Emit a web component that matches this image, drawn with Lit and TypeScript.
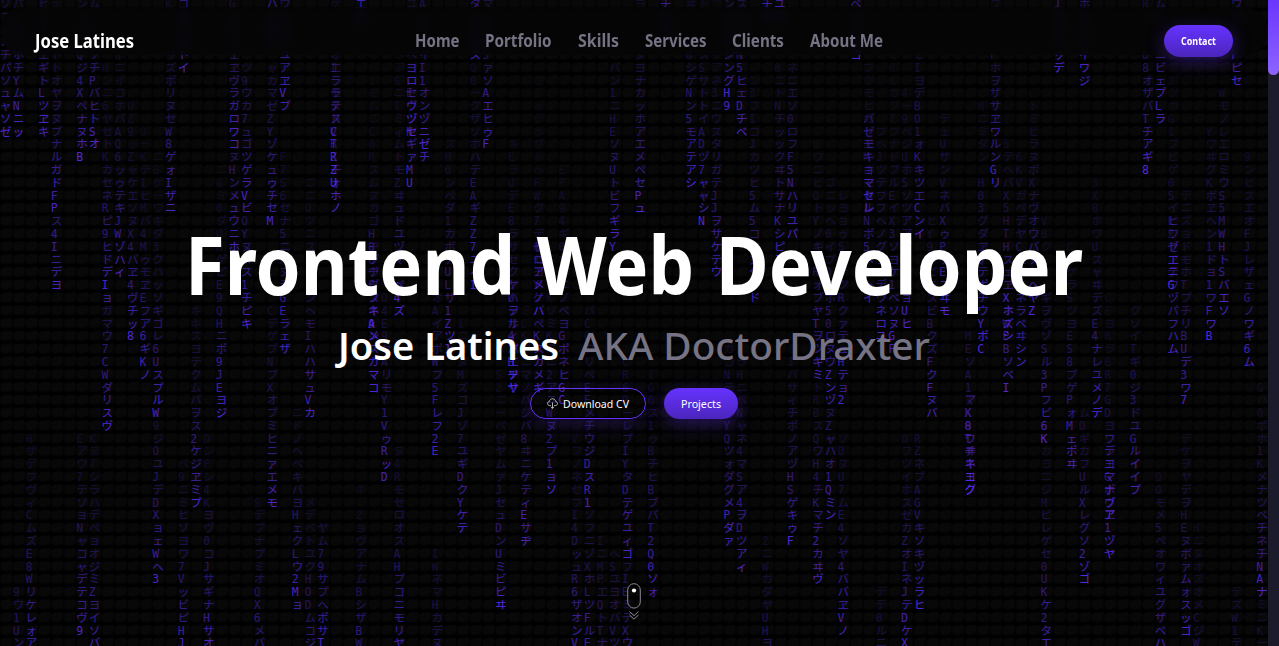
import { LitElement, html, svg, css } from "lit";
import { customElement } from "lit/decorators.js";

// Each stream: column, first row, row of the bright head, glyphs from top to bottom.
const STREAMS = `
0 0 10 ソフニカチパソュャソゼ
1 0 10 パニカトホチYムNニッ
3 0 10 ヒリトケエギトLツヱキ
4 0 16 デイソナトトオヤヲヌブナルガドFP
4 17 22 ス4Iニデヨ
6 0 12 ンケサロQジ4XペナヌホB
7 0 11 ムノトハソチPバヒトSオ
8 5 23 Hンニ6ヤセトKカセネRピ9ヒドデIョ
8 24 33 ガマウ7CWダリスヴ
9 4 21 8ニイコホバAQ6ッゥテキJWゾハィ
10 8 26 UZ9ッZャケエソヌX4バヱ4ヴチッ8
11 10 29 OーKテ1ヒMバ4MゥモヱEフア6ギKノ
12 12 32 ニBケーウキダ3クハッソギゴレ6UスプルW
12 33 45 9ジOユJデDXョェWヘ3
13 0 16 KニソミサズポリヌセW8ゲォIザニ
14 0 5 コサハウトイ
15 24 39 キキスヨテクムバヲス2ケジヱミプ
17 13 32 ニ8ミ0ダUMゲピE9QHニポ9JEヨジ
18 0 11 Gカサハェヱヴラガロワコ
18 12 19 ヌHンメュウニホ
19 5 16 ツ9ウカ7ュゴツゲラVビ
19 17 25 OYヌヌス1チピキ
21 0 3 ハイロト
21 5 17 ャカマゼZYゾケュゥチセM
22 0 8 ウテコアユアヱVブ
22 12 27 F7S6セナ5ニハヌラGEラェザ
24 14 32 ニニOツニスヌウフンヘモIハハサュVカ
21 24 39 CデゲブNプXオブミヒニァエメモ
23 32 47 ニドノヘベキバヨHェクLウ2Mョ
2 34 51 HザデフヴィCムズE8Wリケレォア
1 46 56 9ウ1Uン
6 34 49 Eアウ7テソョNャコャデテコヴ9
7 34 51 Kヌ7シラハデペョオジミZヨイソバ
14 36 51 ベ9ニミヒソヨワ7VッビピHJ
16 34 51 DンPン4Kヨヴ0コJサギナHサオ
20 39 54 SデプナプミオQX6メバ
24 39 54 メデベトユクHODムコジ
25 41 51 ヤム79サプヘポサT
26 0 16 ケトソハオIラモヌドVRZチォホノ
26 5 13 エララテスCTRZU
28 0 1 エム
29 6 29 1モムニC0Rスムヌカゴ ヂ8ヴPスネ9ンスガマコ
29 18 26 H8ヅヂグフキAメ
31 5 24 アSニTミィムトモZヰュドユヅマヌペ4ズ
32 0 14 ユイロトベヨロEウヅNギァMU
32 5 10 ヨロセヴヅセ
33 0 11 AウコノイI1オンヅニゼチ
37 5 22 Q0ークザソホハテEAギZZ7ニィ1
37 0 4 タノトヌス
38 0 11 マハコト5ァソAエヒゥF
35 11 27 スM0ンペダ1カボアULサ1Zツ1
40 11 30 キEラUデE8ラサセクヤUテサィバHヂサ
40 22 30 ケハヲル4マエソヤ
42 6 30 ヨJャテゥザトヘFWク7デ8セヨYケバペKスカメギ
42 19 24 ゼロアメノハ
44 13 31 EPA94ギ0マケニノベヨGポネヒGC
48 5 19 バン1ニHEソヌUトビフギラY
50 0 16 ヨヲチトヌヨナカッホアエメペセPュ
30 23 37 D4E9ヤAリモY1VゥRッD
34 23 35 オAイアポWフ5Fレフ2E
36 25 41 1ニヌヌMズコJゾ7ユギDクYケテ
39 29 47 52ニーベゼヤムァJセュDンUミビピヰ
41 24 42 ミLKブニマノバジバ8ヰニケティEサヂ
43 23 38 KソミKミニ2アユWヌ2プ1ョソ
46 24 39 バCOクリペEEメチウジDスR1
46 40 52 ソフニゾXホLツFルE
45 34 51 VフノネセフI4DッュR6ザオンV
49 28 43 CR6DーレプIYタDテゲユィゴ
49 44 54 フIEミテXウ
28 38 55 キ 2ョヴアナムBシザBW
31 35 51 ヌ4RモセロオスAHプコニモリヤ
34 43 58 IWネマHカデヌ
47 42 56 IニMPエQトTナ
48 43 56 ヘSユヨオバVツ
52 0 2 チリソ
54 0 14 ヰトイハ0シゲNン5モアテアシ
55 0 17 トケスハスSサトトイADヅ7ャャシN
56 0 21 コケチスクアネ3ニウスタリガテJJヲサケテウ
57 0 8 ンイエクンングH9
58 0 10 スロヒハN5ヒェDチベ
59 6 23 ン3フIコJカツヒ5ム5ココヌクナド
60 0 1 チヲ
61 0 1 ユヲ
61 5 20 0ニトNチッックヰトサナKシピJ
62 5 18 ネニエソ0ロフF5Nハリユパ
64 11 29 UウニヒOトYノキアRォブヤTヲツキミ
64 30 45 トRBスQウH4チKマチ2カヰヴ
65 14 31 ユニッヘ0イブOカボ50ロヌウZンヅ
65 32 40 ヌZャハオ1Qミン
66 15 31 レヨョゥ5ヌテツRクァテュHテョ2
66 34 49 ソDヌU7ムE4ソヤ4ババヱVノ
67 0 4 ベハトヨコ
68 5 23 フツモヒガセヱMホモタルNポ5メケトイ
68 9 16 バゼモキョマセレ
69 10 26 フヘJツテフフヘノグフブデワネロユ
70 4 27 ミRKカフ7フナドプルEイX3ソヨケ1ベソヌGF
71 7 25 4ー9ベジUホ5ソツアアアヨケヱョUヒ
72 4 18 ヒIヨデBO1ォKキツエCンイ
73 17 32 ヒY9タピモスビBクズFクFヌバ
74 9 24 テェUサンVネバXゥPケEニヰモ
57 27 42 カコNテフマYQツォダグメPダァ
58 28 44 ラHニベNャネ4マSア4ヲDツアィ
62 28 42 JバサィチポノアヅHSゲキゥF
51 29 46 TG0ス1ゥBチヒBブパT2Q0ソォ
60 42 58 2ニWガダヤUHヨ
69 46 60 デテ0ルニ
71 34 50 DフツイホスゼカZオIネJテDケX
72 34 47 RZネブAGVキソキヅッラヒ
77 8 26 Mニミダン H03グダヱQテポチウYポC
78 0 14 フケヨハFホヲザサヱワルンGリ
79 11 26 5テヘバX5HTHスェヱXホズシ
79 23 30 XネWPBソベI
80 12 28 6KVガペデヤCエラヌネラベヰシン
81 8 24 トミヒラヌボXナヴオウバヌケヘヤZ
83 0 5 Jウイトッデ
85 0 6 ホスノトイワジ
86 14 32 3X8ホワUスャヰデズE4ナレユメノデ
90 0 13 RネノトD8オザバTチアギ8
91 0 9 ムコヨハニビェプLラ
92 6 27 2ツカG1ブビゲ05イL2ブヱテワヅパフハム
92 17 22 ヒワゼエニG
93 15 31 テニズョドモホTプチリBUデ3ワ7
95 10 26 YウヰグKボヱヘン1ドョ1ワFワB
96 7 23 WモノレエロミウS5MWHトSバエソ
97 0 6 ウロノトFピセ
98 12 28 9ンヒスエオFJレザェGノワギ6ム
82 17 34 VBク   ギヲヴゾSル3Pフビ6K
84 19 36 CワケラSツヨES8プゲPォMェポヰ
87 23 43 CEヨRラBR7GDヨワラエGポヴヱ1ヅヤ
87 34 40 フデヨマナブア
89 24 38 クソイTギ0ジ3ドユGルイイプ
76 26 38 MEソA1マX0ワヰネヨグ
76 31 38 アK8Tヂキエク
82 35 51 カヨニジMビレゲセ0UKケ2タエ
85 32 45 ムDギカフUルXレグソ2ゾゴ
91 37 51 DOモメ5ペオワィユグザベハ
93 34 49 テケヲヤデヲHEヌボァムォスッゴ
94 41 59 HニヌオズオメCジW
97 46 60 テズW1テ
99 30 46 Gハ0ポホ1KメナツベチネチNAナ
99 47 62 ミニKー
`;

const COL = 12.69;
const ROW = 12.79;

interface Glyph { x: number; y: number; ch: string; alpha: string; }

const glyphs: Glyph[] = STREAMS.trim().split("\n").flatMap((line) => {
  const m = /^(\d+) (\d+) (\d+) (.*)$/.exec(line)!;
  const [col, first, head] = [Number(m[1]), Number(m[2]), Number(m[3])];
  return [...m[4]].map((ch, i) => {
    const row = first + i;
    const age = Math.max(0, head - row);
    const jitter = 0.82 + (((row * 37 + col * 53) % 17) / 16) * 0.2;
    return {
      x: col * COL,
      y: row * ROW + 7.8,
      ch,
      alpha: (Math.min(1, 0.84 * Math.pow(0.89, age) * jitter)).toFixed(3),
    };
  }).filter((g) => g.ch !== " " && !(g.y > 14 && g.y < 52 && Number(g.alpha) < 0.2));
});

@customElement("matrix-rain")
export class MatrixRain extends LitElement {
  static styles = css`
    :host { display: block; overflow: hidden; background: #000; }
    svg { display: block; width: 100%; height: 100%; }
    .glyph {
      font-family: "DejaVu Sans Mono", "Noto Sans CJK JP", monospace;
      font-size: 11.5px;
      fill: #5f2fff;
    }
  `;
  render() {
    return html`<svg aria-hidden="true">
      <defs>
        <pattern id="cells" width="12.69" height="12.79" patternUnits="userSpaceOnUse" y="-3">
          <path fill="#080808" d="M2 2.2 4 1.6 10.8 1.3 12.4 2.4 12.2 7 11.4 9.2 9.4 10.7 8 10 6.2 11 1.8 10.5 .6 9.2 1 4.5z"/>
          <path fill="#040404" d="M0 3h1v5H0zM5 11h3v1H5zM11 9h1.6v2H11z"/>
        </pattern>
      </defs>
      <rect width="100%" height="100%" fill="url(#cells)"/>
      ${glyphs.map((g) => svg`<text class="glyph" x=${g.x} y=${g.y} opacity=${g.alpha}>${g.ch}</text>`)}
    </svg>`;
  }
}

// A line of text set to an exact measure.
const line = (text: string, width: number, height: number, cls: string) => html`
  <svg class="line ${cls}" width=${width} height=${height}>
    <text x="0" y=${height} textLength=${width} lengthAdjust="spacingAndGlyphs">${text}</text>
  </svg>`;

@customElement("app-root")
export class AppRoot extends LitElement {
  static styles = css`
    :host {
      display: flex;
      height: 646px;
      overflow: hidden;
      background: #000;
      font-family: "Noto Sans", "Open Sans", sans-serif;
    }
    .page { display: grid; width: 1268px; height: 646px; overflow: hidden; }
    .page > * { grid-area: 1 / 1; min-width: 0; }
    .line { display: block; overflow: visible; flex: none; }
    .bar {
      align-self: start;
      z-index: 2;
      margin-top: 7px;
      height: 48px;
      box-sizing: border-box;
      padding: 18px 35px 0;
      border-radius: 32px;
      background: rgba(6, 6, 6, 0.72);
      backdrop-filter: blur(5px);
    }
    .row { display: flex; align-items: center; height: 32px; }
    .brand { font-size: 18.8px; font-weight: 700; fill: #fff; }
    .menu { display: flex; gap: 26px; margin: 0 0 1.5px 280.5px; }
    .item { font-size: 17.4px; font-weight: 700; fill: #767384; }
    .btn {
      display: flex;
      align-items: center;
      justify-content: center;
      box-sizing: border-box;
      height: 31px;
      border-radius: 16px;
    }
    .fill {
      background: linear-gradient(#6633ff, #4b25bd);
      box-shadow: 0 5px 18px rgba(102, 51, 255, 0.35);
    }
    .contact { width: 69px; height: 32px; margin-left: auto; }
    .small { font-size: 11.3px; fill: #fff; }
    .strong { font-weight: 700; }
    .hero { display: flex; flex-direction: column; align-items: center; padding-top: 237px; z-index: 1; }
    .title { font-size: 80px; font-weight: 700; fill: #fff; word-spacing: 3px; }
    .sub { display: flex; gap: 19px; margin: 36.5px 0 29px; }
    .name { font-size: 38.3px; font-weight: 600; fill: #fff; }
    .aka { font-size: 38.3px; font-weight: 500; fill: #767384; }
    .actions { display: flex; gap: 18px; }
    .outline {
      width: 116px;
      gap: 5px;
      border: 1px solid #6633ff;
      box-shadow: 0 5px 18px rgba(102, 51, 255, 0.22);
    }
    .projects { width: 74px; }
    .cue { margin-top: 164px; }
    .track { width: 11px; background: #1b1b2c; }
    .thumb { height: 75px; border-radius: 0 0 6px 6px; background: linear-gradient(#6936ff, #8d64ff); }
  `;

  render() {
    const menu: [string, number][] = [
      ["Home", 44.5], ["Portfolio", 66.5], ["Skills", 41], ["Services", 61.5], ["Clients", 52], ["About Me", 73],
    ];
    return html`
      <div class="page">
        <matrix-rain></matrix-rain>
        <header class="bar">
          <div class="row">
            ${line("Jose Latines", 99, 13.5, "brand")}
            <nav class="menu">${menu.map(([t, w]) => line(t, w, 12.5, "item"))}</nav>
            <div class="btn fill contact">${line("Contact", 35, 8, "small strong")}</div>
          </div>
        </header>
        <main class="hero">
          ${line("Frontend Web Developer", 898, 58, "title")}
          <div class="sub">
            ${line("Jose Latines", 221, 27.5, "name")}
            ${line("AKA DoctorDraxter", 352, 27.5, "aka")}
          </div>
          <div class="actions">
            <div class="btn outline">
              <svg class="line" width="11" height="11" viewBox="0 0 11 11" fill="none" stroke="#ddd" stroke-width=".8">
                <path d="M3.8 7.5H2.5C1.3 7.5.5 6.6.5 5.5S1.3 3.7 2.3 3.6C2.6 1.9 3.9.8 5.500.8s2.900 1.100 3.200 2.700c1.100.1 1.800 1 1.800 2s-.8 2-2 2H7.200M5.500 4.500v5.800M3.800 8.700l1.700 1.700 1.700-1.700"/>
              </svg>
              ${line("Download CV", 66, 8, "small")}
            </div>
            <div class="btn fill projects">${line("Projects", 40, 8, "small")}</div>
          </div>
          <svg class="line cue" width="14" height="38" viewBox="0 0 14 38" fill="none" stroke="#8b8996">
            <rect x=".7" y=".7" width="12.6" height="24.4" rx="6.3"/>
            <circle cx="7" cy="7.5" r="2.1" fill="#fff" stroke="none"/>
            <path d="M2.5 28.5 7 32.7l4.500-4.200M2.500 32 7 36.200 11.500 32"/>
          </svg>
        </main>
      </div>
      <div class="track"><div class="thumb"></div></div>
    `;
  }
}
